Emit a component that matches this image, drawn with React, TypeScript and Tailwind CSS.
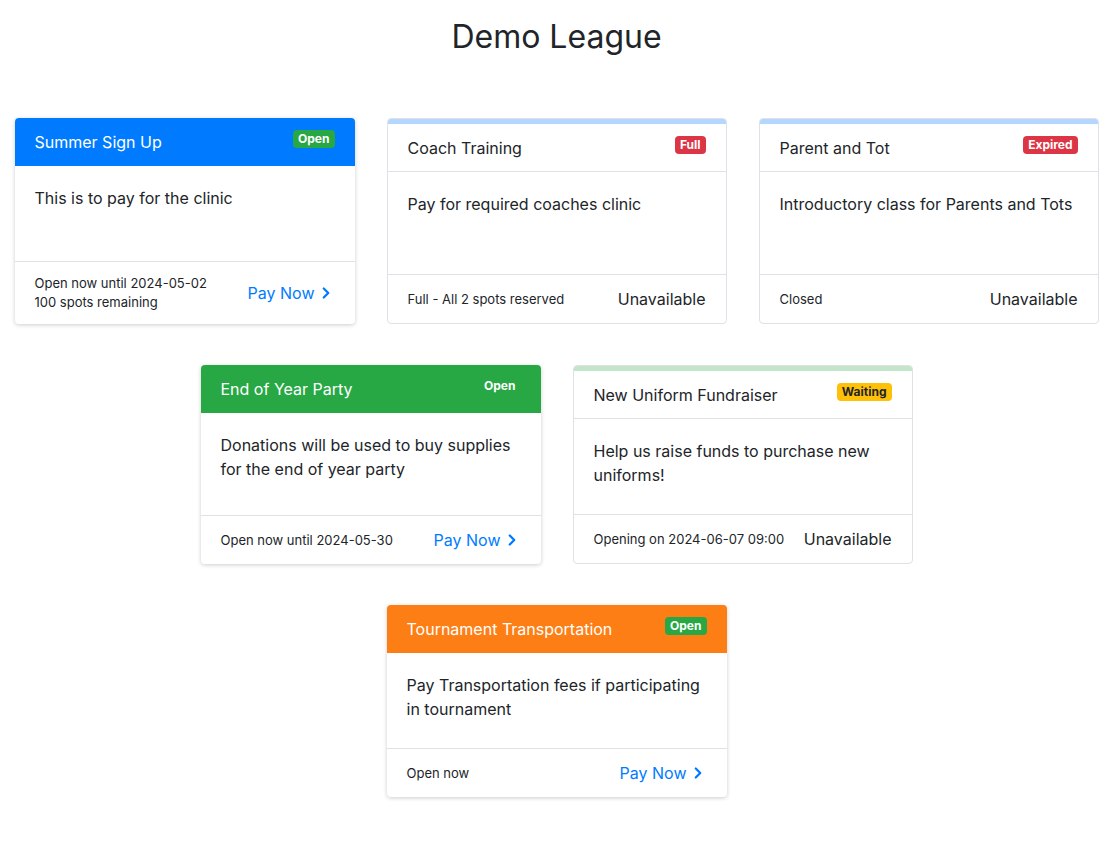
import { ChevronRight } from "lucide-react"

type Card = {
  title: string
  badge: string
  badgeCls: string
  head: "blue" | "green" | "orange" | "plainBlue" | "plainGreen"
  body: string
  foot: string[]
  pay: boolean
}

const rows: Card[][] = [
  [
    { title: "Summer Sign Up", badge: "Open", badgeCls: "bg-[#28a745] text-white", head: "blue", body: "This is to pay for the clinic", foot: ["Open now until 2024-05-02", "100 spots remaining"], pay: true },
    { title: "Coach Training", badge: "Full", badgeCls: "bg-[#dc3545] text-white", head: "plainBlue", body: "Pay for required coaches clinic", foot: ["Full - All 2 spots reserved"], pay: false },
    { title: "Parent and Tot", badge: "Expired", badgeCls: "bg-[#dc3545] text-white", head: "plainBlue", body: "Introductory class for Parents and Tots", foot: ["Closed"], pay: false },
  ],
  [
    { title: "End of Year Party", badge: "Open", badgeCls: "bg-[#28a745] text-white", head: "green", body: "Donations will be used to buy supplies for the end of year party", foot: ["Open now until 2024-05-30"], pay: true },
    { title: "New Uniform Fundraiser", badge: "Waiting", badgeCls: "bg-[#ffc107] text-[#212529]", head: "plainGreen", body: "Help us raise funds to purchase new uniforms!", foot: ["Opening on 2024-06-07 09:00"], pay: false },
  ],
  [
    { title: "Tournament Transportation", badge: "Open", badgeCls: "bg-[#28a745] text-white", head: "orange", body: "Pay Transportation fees if participating in tournament", foot: ["Open now"], pay: true },
  ],
]

function EventCard({ c }: { c: Card }) {
  const colored = c.head === "blue" || c.head === "green" || c.head === "orange"
  const headBg =
    c.head === "blue" ? "bg-[#007bff] text-white" :
    c.head === "green" ? "bg-[#28a745] text-white" :
    c.head === "orange" ? "bg-[#fd7e14] text-white" : "bg-white text-[#212529] border-b border-[#dee2e6]"
  return (
    <div className={`w-[340px] flex flex-col bg-white rounded-[4px] overflow-hidden ${colored ? "shadow-[0_1px_4px_rgba(0,0,0,0.2)]" : "border border-[#dee2e6]"}`}>
      {c.head === "plainBlue" && <div className="h-[5px] bg-[#b3d7ff] -mx-px" />}
      {c.head === "plainGreen" && <div className="h-[5px] bg-[#c3e6cb] -mx-px" />}
      <div className={`h-[48px] flex items-center justify-between pl-5 pr-5 ${headBg}`}>
        <span className="text-[16px]">{c.title}</span>
        <span className={`self-start mt-[12px] text-[12px] font-bold leading-none px-[5px] py-[3px] rounded-[4px] ${c.badgeCls}`}>{c.badge}</span>
      </div>
      <div className={`flex-1 px-5 pt-[20px] pb-6 text-[16px] leading-6 text-[#212529] ${colored ? "border-b border-[#dee2e6]" : "border-b border-[#dee2e6]"} min-h-[96px]`}>
        {c.body}
      </div>
      <div className="flex items-center justify-between px-5 py-[12px] min-h-[48px]">
        <div className="text-[13px] leading-[19px] text-[#212529]">
          {c.foot.map((f) => <div key={f}>{f}</div>)}
        </div>
        {c.pay ? (
          <span className="flex items-center text-[16px] text-[#007bff]">Pay Now<ChevronRight className="w-[18px] h-[18px] ml-[2px]" strokeWidth={3} /></span>
        ) : (
          <span className="text-[16px] text-[#212529]">Unavailable</span>
        )}
      </div>
    </div>
  )
}

export default function App() {
  return (
    <div className="min-h-screen bg-white pt-[17px] pb-6" style={{ fontFamily: "Inter, 'Open Sans', sans-serif" }}>
      <h1 className="text-center text-[32px] text-[#212529] leading-[40px] mb-[61px]">Demo League</h1>
      <div className="flex flex-col items-center gap-[41px]">
        {rows.map((r, i) => (
          <div key={i} className="flex gap-[32px]">
            {r.map((c) => <EventCard key={c.title} c={c} />)}
          </div>
        ))}
      </div>
    </div>
  )
}
